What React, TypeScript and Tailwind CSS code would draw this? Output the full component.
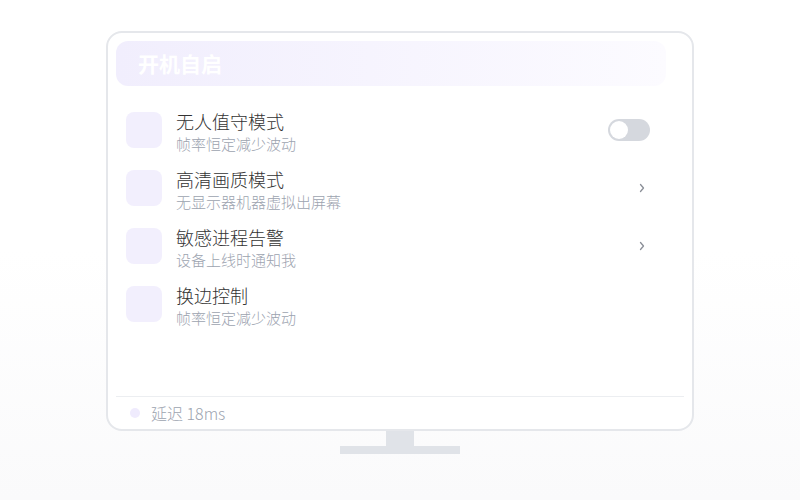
import React from "react";

const rows = [
  { title: "无人值守模式", sub: "帧率恒定减少波动", action: "toggle" },
  { title: "高清画质模式", sub: "无显示器机器虚拟出屏幕", action: "chevron" },
  { title: "敏感进程告警", sub: "设备上线时通知我", action: "chevron" },
  { title: "换边控制", sub: "帧率恒定减少波动", action: "none" },
];

function Chevron() {
  return (
    <svg width="16" height="16" viewBox="0 0 16 16" fill="none">
      <path d="M6.5 4.5 L9.5 8 L6.5 11.5" stroke="#8b8f98" strokeWidth="1.3" strokeLinecap="round" strokeLinejoin="round" />
    </svg>
  );
}

export default function App() {
  return (
    <div
      className="w-[800px] h-[500px] bg-gradient-to-b from-white via-white to-[#fafafb] pt-[31px] flex flex-col items-center"
      style={{ fontFamily: '"Noto Sans CJK SC", "Noto Sans", sans-serif' }}
    >
      <div className="w-[588px] h-[400px] rounded-2xl border-2 border-[#e5e7eb] bg-white px-2 pt-2 flex flex-col">
        <div className="h-[45px] w-[550px] rounded-xl bg-gradient-to-r from-[#f1eefd] to-[#fcfbff] flex items-center pl-[22px]">
          <span className="text-[21px] font-bold text-white leading-none">开机自启</span>
        </div>
        <div className="flex-1 mt-[15px] flex flex-col">
          {rows.map((r) => (
            <div key={r.title} className="h-[58px] flex items-center px-2.5 gap-3.5">
              <div className="w-9 h-9 rounded-lg bg-[#f2effd] shrink-0" />
              <div className="flex-1 flex flex-col pt-[3px]">
                <div className="text-[18px] leading-[23px] text-[#333333] font-light">{r.title}</div>
                <div className="text-[15px] leading-[21px] text-[#9ca3af] font-light">{r.sub}</div>
              </div>
              {r.action === "toggle" && (
                <div className="w-[42px] h-[22px] rounded-full bg-[#d5d8de] mr-[24px] flex items-center px-[2px]">
                  <div className="w-[18px] h-[18px] rounded-full bg-white" />
                </div>
              )}
              {r.action === "chevron" && (
                <div className="mr-[24px] w-4 h-4 flex items-center justify-center">
                  <Chevron />
                </div>
              )}
            </div>
          ))}
        </div>
        <div className="h-[33px] border-t border-[#eceef1] flex items-center px-3.5 gap-[11px]">
          <div className="w-2.5 h-2.5 rounded-full bg-[#efebfd]" />
          <span className="text-[16px] text-[#9ca3af] leading-none font-light">延迟 18ms</span>
        </div>
      </div>
      <div className="w-[28px] h-[15px] bg-[#e0e3e8]" />
      <div className="w-[120px] h-2 bg-[#e0e3e8]" />
    </div>
  );
}
